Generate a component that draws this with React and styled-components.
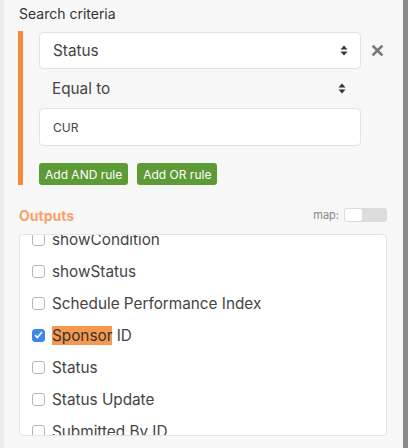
import React, { useEffect, useRef } from 'react';
import styled, { createGlobalStyle } from 'styled-components';

const GlobalStyle = createGlobalStyle`
  html, body {
    margin: 0;
    padding: 0;
    background: #f7f7f7;
  }
  body {
    font-family: Inter, "Liberation Sans", sans-serif;
    color: #444;
  }
`;

const Wrapper = styled.div`
  display: flex;
  width: 408px;
  height: 448px;
  overflow: hidden;
  background-color: #f7f7f7;
`;

const Gutter = styled.div`
  width: 4px;
  background: #ececec;
`;

const Panel = styled.div`
  flex: 1;
  padding: 5px 16px 0 14px;
  display: flex;
  flex-direction: column;
`;

const EdgeBar = styled.div`
  width: 5px;
  background: #8a8a8a;
`;

const Label = styled.div`
  font-size: 14px;
  color: #333;
  height: 18px;
  line-height: 18px;
  padding-left: 1px;
`;

const Criteria = styled.div`
  margin-top: 8px;
  border-left: 5px solid #f7883a;
  padding: 1px 0 0 16px;
  display: flex;
  flex-direction: column;
`;

const RuleRow = styled.div`
  display: flex;
  align-items: center;
  margin-right: ${(p) => (p.inset ? 26 : 0)}px;
`;

const Field = styled.div`
  flex: 1;
  height: ${(p) => p.h || 37}px;
  box-sizing: border-box;
  display: flex;
  align-items: center;
  justify-content: space-between;
  padding: 0 ${(p) => (p.bare ? 14 : 12)}px 0 ${(p) => (p.bare ? 12 : 13)}px;
  background: ${(p) => (p.bare ? 'transparent' : '#fff')};
  border: 1px solid ${(p) => (p.bare ? 'transparent' : '#e2e2e2')};
  border-radius: 4px;
  font-size: ${(p) => p.size || 15.3}px;
  color: #444;
`;

const Close = styled.div`
  width: 26px;
  padding-right: 3px;
  box-sizing: border-box;
  display: flex;
  justify-content: flex-end;
`;

const Buttons = styled.div`
  display: flex;
  gap: 9px;
  margin-top: 17px;
`;

const Button = styled.button`
  height: 22px;
  padding: 0 6px;
  border: none;
  border-radius: 3px;
  background: #5e9a35;
  color: #fff;
  font-family: Inter, "Liberation Sans", sans-serif;
  font-size: 12px;
`;

const OutputsHead = styled.div`
  display: flex;
  align-items: center;
  justify-content: space-between;
  margin-top: 22px;
  height: 16px;
  padding-left: 1px;
`;

const Outputs = styled.div`
  font-size: 14px;
  font-weight: 700;
  color: #f4a36b;
`;

const MapToggle = styled.div`
  display: flex;
  align-items: center;
  gap: 5px;
  font-size: 11px;
  color: #888;
`;

const Toggle = styled.div`
  width: 43px;
  height: 14px;
  border-radius: 3px;
  background: #dcdcdc;
  display: flex;
  padding: 1px;
  box-sizing: border-box;
`;

const Knob = styled.div`
  width: 17px;
  background: #fff;
  border-radius: 2px;
`;

const ListBox = styled.div`
  margin-top: 11px;
  margin-left: 1px;
  height: 202px;
  box-sizing: border-box;
  background: #fff;
  border: 1px solid #e3e3e3;
  border-radius: 4px;
  overflow: hidden;
`;

const Row = styled.label`
  height: 32px;
  display: flex;
  align-items: center;
  gap: 7px;
  padding-left: 12px;
  font-size: 15.3px;
  color: #444;
`;

const Box = styled.span`
  width: 13px;
  height: 13px;
  box-sizing: border-box;
  border-radius: 3px;
  border: 1px solid ${(p) => (p.checked ? '#3d86f0' : '#b5b5b5')};
  background: ${(p) => (p.checked ? '#3d86f0' : '#fff')};
  display: flex;
  align-items: center;
  justify-content: center;
`;

const Mark = styled.span`
  background: #f6994e;
  color: #333;
`;

function Arrows() {
  return (
    <svg width="8" height="11" viewBox="0 0 8 11">
      <path d="M4 0.5 L7.5 4.5 H0.5 Z" fill="#333" />
      <path d="M4 10.5 L7.5 6.5 H0.5 Z" fill="#333" />
    </svg>
  );
}

function Cross() {
  return (
    <svg width="13" height="13" viewBox="0 0 12 12">
      <path d="M1.5 1.5 L10.5 10.5 M10.5 1.5 L1.5 10.5" stroke="#777" strokeWidth="2.5" />
    </svg>
  );
}

const items = [
  'showActions',
  'showCondition',
  'showStatus',
  'Schedule Performance Index',
  'Sponsor ID',
  'Status',
  'Status Update',
  'Submitted By ID',
];

export default function App() {
  const listRef = useRef(null);
  useEffect(() => {
    if (listRef.current) listRef.current.scrollTop = 44;
  }, []);

  return (
    <Wrapper>
      <GlobalStyle />
      <Gutter />
      <Panel>
        <Label>Search criteria</Label>
        <Criteria>
          <RuleRow>
            <Field>
              Status
              <Arrows />
            </Field>
            <Close>
              <Cross />
            </Close>
          </RuleRow>
          <RuleRow inset>
            <Field bare h={39}>
              Equal to
              <Arrows />
            </Field>
          </RuleRow>
          <RuleRow inset>
            <Field h={38} size={12}>
              CUR
            </Field>
          </RuleRow>
          <Buttons>
            <Button>Add AND rule</Button>
            <Button>Add OR rule</Button>
          </Buttons>
        </Criteria>
        <OutputsHead>
          <Outputs>Outputs</Outputs>
          <MapToggle>
            map:
            <Toggle>
              <Knob />
            </Toggle>
          </MapToggle>
        </OutputsHead>
        <ListBox ref={listRef}>
          {items.map((item, index) => (
            <Row key={index}>
              <Box checked={item === 'Sponsor ID'}>
                {item === 'Sponsor ID' && (
                  <svg width="9" height="8" viewBox="0 0 9 8">
                    <path d="M1 4.2 L3.4 6.5 L8 1" stroke="#fff" strokeWidth="1.6" fill="none" />
                  </svg>
                )}
              </Box>
              {item === 'Sponsor ID' ? (
                <span>
                  <Mark>Sponsor</Mark> ID
                </span>
              ) : (
                item
              )}
            </Row>
          ))}
        </ListBox>
      </Panel>
      <EdgeBar />
    </Wrapper>
  );
}
